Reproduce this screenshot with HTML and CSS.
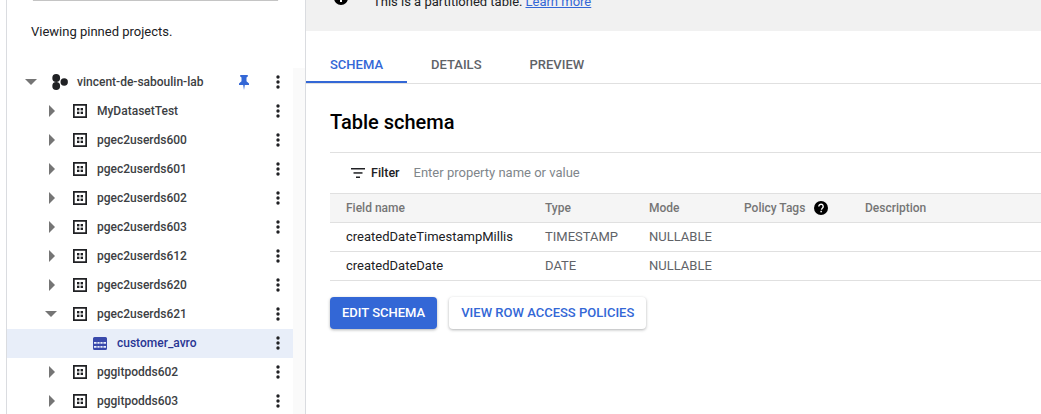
FILE: index.html
```html
<!DOCTYPE html>
<html lang="en">
<head>
  <meta charset="UTF-8" />
  <title>Table schema</title>
  <link rel="stylesheet" href="styles.css">
</head>
<body>
  <svg class="defs" width="0" height="0" aria-hidden="true">
    <symbol id="dataset" viewBox="0 0 14 14">
      <path fill-rule="evenodd" d="M0 0h14v14H0zM1.7 1.7v10.6h10.6V1.7z"/>
      <rect x="4" y="4" width="2.4" height="2.4"/><rect x="7.6" y="4" width="2.4" height="2.4"/>
      <rect x="4" y="7.6" width="2.4" height="2.4"/><rect x="7.6" y="7.6" width="2.4" height="2.4"/>
    </symbol>
    <symbol id="dots" viewBox="0 0 4 14">
      <circle cx="2" cy="2" r="1.7"/><circle cx="2" cy="7" r="1.7"/><circle cx="2" cy="12" r="1.7"/>
    </symbol>
  </svg>

  <div class="page">
    <aside class="sidebar">
      <div class="search"></div>
      <p class="viewing">Viewing pinned projects.</p>

      <ul class="tree">
        <li class="row project">
          <span class="caret down"></span>
          <svg class="project-icon" width="16" height="16" viewBox="0 0 16 16"><circle cx="4.2" cy="4" r="3.9"/><circle cx="4.2" cy="12" r="3.9"/><circle cx="12.200" cy="8" r="3.700"/></svg>
          <span class="name">vincent-de-saboulin-lab</span>
          <svg class="pin" width="10" height="15" viewBox="0 0 10 15"><path d="M1.2 0h7.6v1.5L7.5 2.6v3.6L10 8.6v1.500H5.800L5 15l-.8-4.900H0V8.600l2.500-2.400V2.600L1.200 1.500z"/></svg>
          <svg class="dots"><use href="#dots"/></svg>
        </li>
        <li class="row"><span class="caret"></span><svg class="ds"><use href="#dataset"/></svg><span class="name">MyDatasetTest</span><svg class="dots"><use href="#dots"/></svg></li>
        <li class="row"><span class="caret"></span><svg class="ds"><use href="#dataset"/></svg><span class="name">pgec2userds600</span><svg class="dots"><use href="#dots"/></svg></li>
        <li class="row"><span class="caret"></span><svg class="ds"><use href="#dataset"/></svg><span class="name">pgec2userds601</span><svg class="dots"><use href="#dots"/></svg></li>
        <li class="row"><span class="caret"></span><svg class="ds"><use href="#dataset"/></svg><span class="name">pgec2userds602</span><svg class="dots"><use href="#dots"/></svg></li>
        <li class="row"><span class="caret"></span><svg class="ds"><use href="#dataset"/></svg><span class="name">pgec2userds603</span><svg class="dots"><use href="#dots"/></svg></li>
        <li class="row"><span class="caret"></span><svg class="ds"><use href="#dataset"/></svg><span class="name">pgec2userds612</span><svg class="dots"><use href="#dots"/></svg></li>
        <li class="row"><span class="caret"></span><svg class="ds"><use href="#dataset"/></svg><span class="name">pgec2userds620</span><svg class="dots"><use href="#dots"/></svg></li>
        <li class="row"><span class="caret down"></span><svg class="ds"><use href="#dataset"/></svg><span class="name">pgec2userds621</span><svg class="dots"><use href="#dots"/></svg></li>
        <li class="row table selected">
          <svg class="table-icon" width="14" height="13" viewBox="0 0 14 13"><path fill-rule="evenodd" d="M1.5 0h11A1.5 1.5 0 0 1 14 1.500V11.500A1.500 1.500 0 0 1 12.500 13h-11A1.500 1.500 0 0 1 0 11.500V1.500A1.500 1.500 0 0 1 1.500 0zM1 5v1.800h2.600V5zm3.400 0v1.800h2.200V5zm3 0v1.800h2.200V5zm3 0v1.800H13V5zM1 9v1.800h2.600V9zm3.400 0v1.800h2.200V9zm3 0v1.800h2.200V9zm3 0v1.800H13V9z"/></svg>
          <span class="name">customer_avro</span>
          <svg class="dots"><use href="#dots"/></svg>
        </li>
        <li class="row"><span class="caret"></span><svg class="ds"><use href="#dataset"/></svg><span class="name">pggitpodds602</span><svg class="dots"><use href="#dots"/></svg></li>
        <li class="row"><span class="caret"></span><svg class="ds"><use href="#dataset"/></svg><span class="name">pggitpodds603</span><svg class="dots"><use href="#dots"/></svg></li>
      </ul>
    </aside>

    <main class="content">
      <div class="banner">
        <svg class="info" width="14" height="14" viewBox="0 0 14 14"><circle cx="7" cy="7" r="7"/><rect x="6" y="6" width="2" height="5" fill="#fff"/><rect x="6" y="3" width="2" height="2" fill="#fff"/></svg>
        <span>This is a partitioned table.</span>
        <a href="#">Learn more</a>
      </div>

      <nav class="tabs">
        <a class="tab active" href="#">SCHEMA</a>
        <a class="tab" href="#">DETAILS</a>
        <a class="tab" href="#">PREVIEW</a>
      </nav>

      <section class="schema">
        <h2>Table schema</h2>

        <div class="filter">
          <svg width="14" height="10" viewBox="0 0 14 10"><rect width="14" height="1.500"/><rect x="2.500" y="4.200" width="9" height="1.500"/><rect x="5" y="8.500" width="4" height="1.500"/></svg>
          <strong>Filter</strong>
          <span>Enter property name or value</span>
        </div>

        <div class="grid head">
          <div>Field name</div>
          <div>Type</div>
          <div>Mode</div>
          <div class="tags">Policy Tags
            <svg width="14" height="14" viewBox="0 0 14 14"><circle cx="7" cy="7" r="7"/><path d="M4.800 5.400a2.200 2.200 0 1 1 3.500 1.800c-.7.500-.8.800-.8 1.500" fill="none" stroke="#fff" stroke-width="1.400"/><rect x="6.400" y="9.800" width="1.500" height="1.500" fill="#fff"/></svg>
          </div>
          <div>Description</div>
        </div>
        <div class="grid body">
          <div class="field">createdDateTimestampMillis</div>
          <div>TIMESTAMP</div>
          <div>NULLABLE</div>
          <div></div>
          <div></div>
        </div>
        <div class="grid body">
          <div class="field">createdDateDate</div>
          <div>DATE</div>
          <div>NULLABLE</div>
          <div></div>
          <div></div>
        </div>

        <div class="actions">
          <button class="btn primary">EDIT SCHEMA</button>
          <button class="btn">VIEW ROW ACCESS POLICIES</button>
        </div>
      </section>
    </main>
  </div>
</body>
</html>
```

FILE: styles.css
```css
/* Global styles */
html,
body {
  margin: 0;
  height: 100%;
  overflow: hidden;
  background: #fff;
  color: #202124;
  font-family: Roboto, "Liberation Sans", sans-serif;
  font-size: 13px;
}
.defs {
  display: block;
  height: 0;
}
.page {
  display: flex;
  height: 414px;
}

/* Left pane */
.sidebar {
  box-sizing: border-box;
  width: 300px;
  flex: none;
  margin-left: 6px;
  border-left: 1px solid #dadce0;
  border-right: 1px solid #dadce0;
  background: linear-gradient(#fff 68px, #fafafa 68px);
}
.search {
  height: 1px;
  margin: 0 27px 0 26px;
  background: #c4c4c4;
  box-shadow: 0 0 1px rgba(0,0,0,0.3);
}
.viewing {
  margin: 0;
  padding: 23px 0 0 24px;
  height: 44px;
  line-height: 16px;
  color: #202124;
  background: #fff;
  width: 262px;
}
.tree {
  list-style: none;
  margin: 0;
  padding: 0;
  width: 286px;
}
.row {
  display: flex;
  align-items: center;
  box-sizing: border-box;
  height: 29px;
  padding: 0 0 1px 42px;
  background: #fff;
  font-weight: 500;
  font-size: 12px;
  color: #3c4043;
}
.row .name {
  flex: 1;
}
.caret {
  width: 0;
  height: 0;
  margin-right: 18px;
  border-top: 6px solid transparent;
  border-bottom: 6px solid transparent;
  border-left: 6px solid #757575;
}
.caret.down {
  margin-left: -4px;
  margin-right: 16px;
  border-left: 6px solid transparent;
  border-right: 6px solid transparent;
  border-top: 6px solid #757575;
  border-bottom: 0;
}
.ds {
  width: 14px;
  height: 14px;
  margin-right: 10px;
  fill: #202124;
}
.dots {
  width: 4px;
  height: 14px;
  margin-right: 13px;
  fill: #202124;
}
.project {
  padding-left: 18px;
}
.project .caret.down {
  margin: 0 15px 0 0;
}
.project-icon {
  margin-right: 9px;
  fill: #202124;
}
.pin {
  margin-right: 27px;
  fill: #3367d6;
}
.table {
  padding-left: 86px;
}
.table-icon {
  margin-right: 10px;
  fill: #3949ab;
}
.selected {
  background: #e8eef9;
  color: #283593;
}

/* Right pane */
.content {
  flex: 1;
  min-width: 0;
}
.banner {
  display: flex;
  gap: 3px;
  height: 31px;
  padding-left: 67px;
  background: #f1f1f1;
  line-height: 16px;
  color: #202124;
  overflow: hidden;
}
.banner span,
.banner a {
  margin-top: -6px;
  height: 16px;
}
.banner a {
  color: #3367d6;
  text-decoration: underline;
}
.info {
  margin: -9px 22px 0 -39px;
  flex: none;
}
.tabs {
  display: flex;
  height: 52px;
  border-bottom: 1px solid #e0e0e0;
}
.tab {
  box-sizing: border-box;
  height: 52px;
  line-height: 68px;
  font-weight: 500;
  font-size: 13px;
  color: #5f6368;
  text-decoration: none;
  padding: 0 24px;
}
.tab.active {
  color: #3367d6;
  border-bottom: 2px solid #3367d6;
}
.schema {
  padding-left: 24px;
}
h2 {
  margin: 0;
  padding-top: 26px;
  height: 42px;
  line-height: 24px;
  font-size: 20px;
  font-weight: 500;
  color: #000;
}
.filter {
  display: flex;
  align-items: center;
  height: 40px;
  border-top: 1px solid #e0e0e0;
  padding-left: 21px;
  color: #80868b;
}
.filter svg {
  margin-right: 6px;
  fill: #202124;
}
.filter strong {
  color: #202124;
  font-size: 12.5px;
  font-weight: 500;
  margin: 0 14px 2px 0;
}
.filter span {
  margin-bottom: 2px;
}
.grid {
  display: grid;
  grid-template-columns: 199px 104px 95px 121px 1fr;
  height: 28px;
  align-items: center;
  border-bottom: 1px solid #e0e0e0;
  color: #5f6368;
}
.grid > div {
  padding-left: 16px;
}
.grid.body {
  height: 27px;
  padding-bottom: 1px;
}
.grid .field {
  color: #202124;
}
.head {
  background: #f5f5f5;
  border-top: 1px solid #e0e0e0;
  font-size: 12px;
  font-weight: 500;
  color: #757575;
}
.tags {
  display: flex;
  align-items: center;
  gap: 9px;
}
.actions {
  display: flex;
  gap: 12px;
  margin-top: 16px;
}
.btn {
  height: 32px;
  padding: 0 12px 2px;
  border: 0;
  border-radius: 4px;
  background: #fff;
  color: #3367d6;
  font-family: inherit;
  font-size: 13px;
  font-weight: 500;
  box-shadow: 0 1px 3px rgba(60,64,67,0.4);
}
.btn.primary {
  background: #3367d6;
  color: #fff;
}
```
